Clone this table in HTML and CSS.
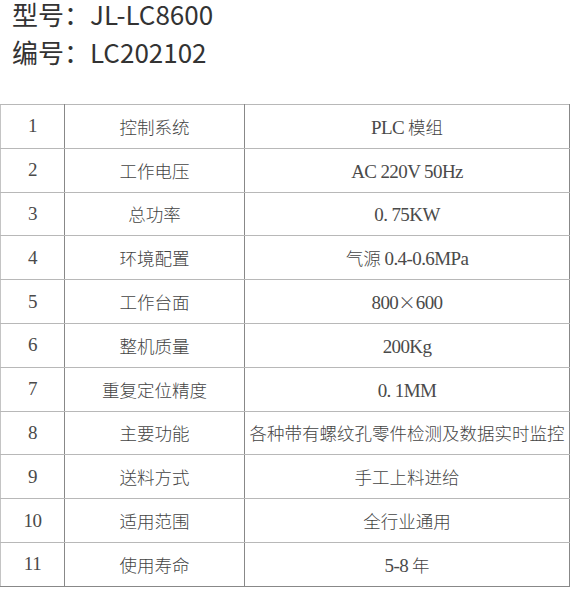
FILE: index.html
```html
<!DOCTYPE html>
<html lang="zh-CN">
<head>
<meta charset="utf-8">
<link rel="stylesheet" href="styles.css">
</head>
<body>
<div class="head">
  <div class="line">型号：JL-LC8600</div>
  <div class="line">编号：LC202102</div>
</div>
<table class="spec">
  <tr><td class="no">1</td><td class="name">控制系统</td><td class="val"><span class="lat">PLC</span> 模组</td></tr>
  <tr><td class="no">2</td><td class="name">工作电压</td><td class="val"><span class="lat">AC 220V 50Hz</span></td></tr>
  <tr><td class="no">3</td><td class="name">总功率</td><td class="val"><span class="lat">0. 75KW</span></td></tr>
  <tr><td class="no">4</td><td class="name">环境配置</td><td class="val">气源 <span class="lat">0.4-0.6MPa</span></td></tr>
  <tr><td class="no">5</td><td class="name">工作台面</td><td class="val"><span class="lat">800</span>×<span class="lat">600</span></td></tr>
  <tr><td class="no">6</td><td class="name">整机质量</td><td class="val"><span class="lat">200Kg</span></td></tr>
  <tr><td class="no">7</td><td class="name">重复定位精度</td><td class="val"><span class="lat">0. 1MM</span></td></tr>
  <tr><td class="no">8</td><td class="name">主要功能</td><td class="val">各种带有螺纹孔零件检测及数据实时监控</td></tr>
  <tr><td class="no">9</td><td class="name">送料方式</td><td class="val">手工上料进给</td></tr>
  <tr><td class="no">10</td><td class="name">适用范围</td><td class="val">全行业通用</td></tr>
  <tr><td class="no">11</td><td class="name">使用寿命</td><td class="val"><span class="lat">5-8</span> 年</td></tr>
</table>
</body>
</html>
```

FILE: styles.css
```css
html, body {
  margin: 0;
  padding: 0;
  background: #ffffff;
}
body {
  width: 570px;
  height: 590px;
  overflow: hidden;
}
.head {
  display: flex;
  flex-direction: column;
  gap: 10px;
  padding: 0 0 0 12px;
  font-family: "Noto Sans CJK SC", "Noto Sans", sans-serif;
  font-size: 26px;
  line-height: 28px;
  color: #333333;
}
.spec {
  margin-top: 38px;
  width: 570px;
  border-collapse: collapse;
  table-layout: fixed;
  font-family: "Noto Sans CJK SC", sans-serif;
  font-size: 17.5px;
  font-weight: 300;
  color: #444444;
}
.spec td {
  height: 42.8px;
  padding: 0;
  text-align: center;
  vertical-align: middle;
  border-top: 1px solid #b8b8b8;
  border-bottom: 1px solid #b8b8b8;
  border-left: 1px solid #888888;
  border-right: 1px solid #888888;
  white-space: nowrap;
}
.spec tr:last-child td {
  border-bottom-color: #888888;
}
.spec td.no {
  width: 63px;
  border-left-color: #c4c4c4;
  font-family: "Liberation Serif", serif;
  font-size: 19px;
  letter-spacing: -0.5px;
  color: #4a4a4a;
}
.spec td.name {
  width: 179px;
}
.lat {
  font-family: "Liberation Serif", serif;
  font-size: 19px;
  letter-spacing: -0.6px;
  color: #4a4a4a;
}
```
